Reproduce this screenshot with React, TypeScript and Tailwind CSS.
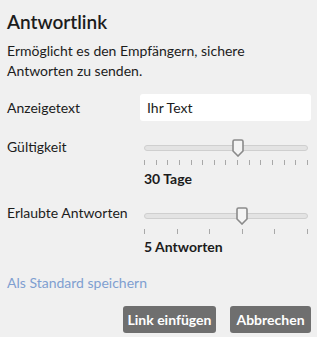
import React from 'react';

type SliderProps = {
  ticks: number;
  index: number;
  value: string;
  topPad: string;
  tickGap: string;
  valueGap: string;
};

function Slider({ ticks, index, value, topPad, tickGap, valueGap }: SliderProps) {
  const pct = (index / (ticks - 1)) * 100;

  return (
    <div className={`flex flex-col pl-[4px] pr-[3px] ${topPad}`}>
      <div className="relative flex h-[18px] items-center">
        <div className="h-[6px] w-full rounded-full border border-[#cfcfcf] bg-[#e3e3e3]" />
        <svg
          className="absolute top-0 -translate-x-1/2"
          style={{ left: `${pct}%` }}
          width="12"
          height="18"
          viewBox="0 0 12 18"
        >
          <path
            d="M2.5 1 H9.5 A1.5 1.5 0 0 1 11 2.5 V12 L6 17 L1 12 V2.5 A1.5 1.5 0 0 1 2.5 1 Z"
            fill="#f4f4f4"
            stroke="#8a8a8a"
            strokeWidth="1.6"
          />
        </svg>
      </div>
      <div className={`flex h-[5px] justify-between ${tickGap}`}>
        {Array.from({ length: ticks }).map((_, i) => (
          <span key={i} className="h-full w-px bg-[#a8a8a8]" />
        ))}
      </div>
      <p className={`text-[14px] font-bold leading-[20px] text-[#1c1c1c] ${valueGap}`}>{value}</p>
    </div>
  );
}

export default function App() {
  const labelStyle = 'text-[14px] leading-[20px] text-[#1c1c1c]';
  const buttonStyle =
    'h-[27px] whitespace-nowrap rounded-[3px] bg-[#6f6f6f] text-[14px] font-bold text-white';

  return (
    <div
      className="h-[337px] w-[317px] bg-[#f0f0f0] pl-[7px] pr-[6px] pt-[10px]"
      style={{ fontFamily: 'Lato, "Noto Sans", sans-serif' }}
    >
      <h1 className="text-[19px] font-semibold leading-[24px] text-[#1c1c1c]">Antwortlink</h1>
      <p className="mt-[7px] text-[14px] leading-[20px] text-[#1c1c1c]">
        Ermöglicht es den Empfängern, sichere
        <br />
        Antworten zu senden.
      </p>

      <div className="mt-[13px] grid grid-cols-[133px_1fr] items-center">
        <label htmlFor="anzeigetext" className={labelStyle}>
          Anzeigetext
        </label>
        <input
          id="anzeigetext"
          type="text"
          defaultValue="Ihr Text"
          className="h-[27px] w-full rounded-[3px] bg-white px-[7px] text-[14px] text-[#1c1c1c] outline-none"
        />
      </div>

      <div className="mt-[16px] grid grid-cols-[133px_1fr] items-start">
        <span className={labelStyle}>Gültigkeit</span>
        <Slider ticks={15} index={8} value="30 Tage" topPad="pt-[2px]" tickGap="mt-[3px]" valueGap="mt-[4px]" />
      </div>

      <div className="mt-[14px] grid grid-cols-[133px_1fr] items-start">
        <span className={labelStyle}>Erlaubte Antworten</span>
        <Slider ticks={6} index={3} value="5 Antworten" topPad="pt-[4px]" tickGap="mt-[4px]" valueGap="mt-[3px]" />
      </div>

      <p className="mt-[16px] text-[14px] leading-[20px] text-[#7f9fd0]">Als Standard speichern</p>

      <div className="mt-[13px] flex justify-end gap-[14px]">
        <button className={`${buttonStyle} w-[93px]`}>Link einfügen</button>
        <button className={`${buttonStyle} w-[81px]`}>Abbrechen</button>
      </div>
    </div>
  );
}
